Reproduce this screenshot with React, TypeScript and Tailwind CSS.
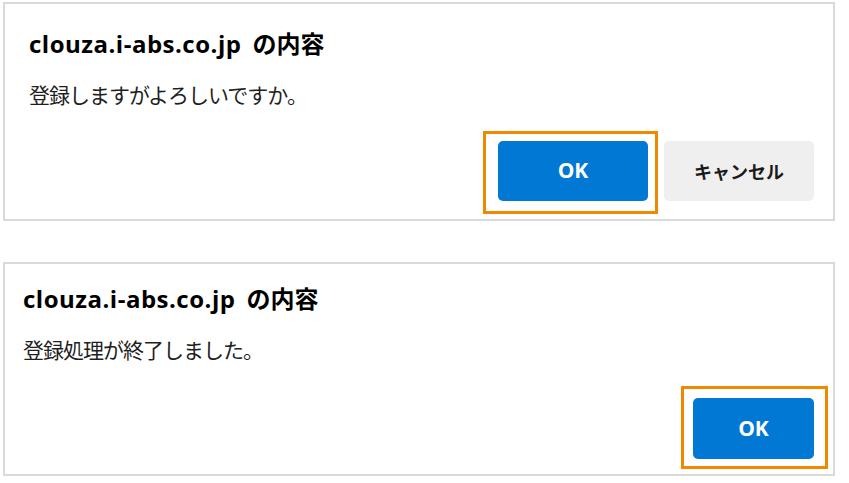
import type { ReactNode } from "react"

const latin = "font-['Open_Sans','Noto_Sans_CJK_JP',sans-serif]"
const jp = "font-['Noto_Sans_CJK_JP','Noto_Sans',sans-serif]"

function Highlight({ children, className }: { children: ReactNode; className: string }) {
  return (
    <div className="relative">
      {children}
      <span className={`pointer-events-none absolute border-[3px] border-[#ef8a00] ${className}`} />
    </div>
  )
}

function Title() {
  return (
    <h2 className={`${latin} text-[24px] font-bold leading-[30px] text-black`}>
      <span className="tracking-[0.5px]">clouza.i-abs.co.jp</span>
      <span className={`${jp} pl-[11px]`}>の内容</span>
    </h2>
  )
}

export default function App() {
  return (
    <main className="flex h-[483px] w-[849px] flex-col bg-white pl-[3px] pt-[2px]">
      {/* confirm dialog */}
      <section className="flex h-[219px] w-[832px] flex-col border-2 border-[#d9d9d9] bg-white pb-[18px] pl-[24px] pr-[19px] pt-[24px]">
        <Title />
        <p className={`${jp} mt-[21px] text-[21px] leading-[28px] tracking-[-1px] text-[#1f1f1f]`}>登録しますがよろしいですか。</p>
        <div className="mt-auto flex justify-end gap-4">
          <Highlight className="-bottom-[13px] -left-[15px] -right-[10px] -top-[10px]">
            <button className={`${latin} flex h-[60px] w-[150px] items-center justify-center rounded-[5px] bg-[#0078d4] text-[21px] font-bold text-white`}>
              OK
            </button>
          </Highlight>
          <button className={`${jp} flex h-[60px] w-[150px] items-center justify-center rounded-[5px] bg-[#efefef] text-[18px] font-bold text-[#1a1a1a]`}>
            キャンセル
          </button>
        </div>
      </section>

      {/* completion dialog */}
      <section className="mt-[41px] flex h-[214px] w-[832px] flex-col border-2 border-[#d9d9d9] bg-white pb-[15px] pl-[18px] pr-[19px] pt-[19px]">
        <Title />
        <p className={`${jp} mt-[21px] text-[21px] leading-[28px] tracking-[-1px] text-[#1f1f1f]`}>登録処理が終了しました。</p>
        <div className="mt-auto flex justify-end">
          <Highlight className="-bottom-[10px] -left-[12px] -right-[14px] -top-[12px]">
            <button className={`${latin} flex h-[61px] w-[121px] items-center justify-center rounded-[5px] bg-[#0078d4] text-[21px] font-bold text-white`}>
              OK
            </button>
          </Highlight>
        </div>
      </section>
    </main>
  )
}
